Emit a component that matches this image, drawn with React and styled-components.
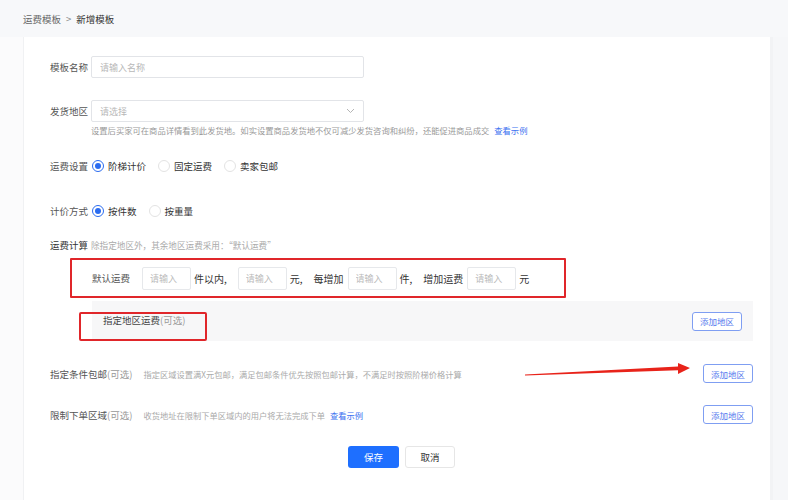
import React from "react";
import styled, { createGlobalStyle } from "styled-components";

const GlobalStyle = createGlobalStyle`
  body {
    margin: 0;
    background: #f7f8fa;
    font-family: "Noto Sans CJK SC", "Noto Sans", sans-serif;
  }
`;

function Radio({ checked, children }) {
  return (
    <RadioItem>
      <RadioDot checked={checked} />
      <span>{children}</span>
    </RadioItem>
  );
}

function App() {
  return (
    <>
      <GlobalStyle />
      <Page>
        <Crumb>
          <span className="prev">运费模板</span>
          <span className="sep">&gt;</span>
          <span className="cur">新增模板</span>
        </Crumb>
        <Body>
          <SideStrip />
          <Card>
            <FormRow height={22} top={19}>
              <Label>模板名称</Label>
              <TextInput placeholder="请输入名称" />
            </FormRow>

            <FormRow height={22} top={22}>
              <Label>发货地区</Label>
              <SelectBox>
                <span>请选择</span>
                <svg width="9" height="6" viewBox="0 0 9 6">
                  <path d="M1 1l3.5 3.5L8 1" fill="none" stroke="#b5b5b5" strokeWidth="1" />
                </svg>
              </SelectBox>
            </FormRow>
            <Hint indent={41}>
              设置后买家可在商品详情看到此发货地。如实设置商品发货地不仅可减少发货咨询和纠纷，还能促进商品成交
              <LinkText>查看示例</LinkText>
            </Hint>

            <FormRow height={14} top={23}>
              <Label>运费设置</Label>
              <RadioGroup>
                <Radio checked>阶梯计价</Radio>
                <Radio>固定运费</Radio>
                <Radio>卖家包邮</Radio>
              </RadioGroup>
            </FormRow>

            <FormRow height={14} top={31}>
              <Label>计价方式</Label>
              <RadioGroup>
                <Radio checked>按件数</Radio>
                <Radio>按重量</Radio>
              </RadioGroup>
            </FormRow>

            <FormRow height={12} top={21}>
              <Label strong>运费计算</Label>
              <SmallNote size={8.6}>除指定地区外，其余地区运费采用：“默认运费”</SmallNote>
            </FormRow>

            <FeeBox>
              <FeeTitle>默认运费</FeeTitle>
              <SmallInput placeholder="请输入" />
              <Unit>件以内,</Unit>
              <SmallInput placeholder="请输入" />
              <Unit>元,</Unit>
              <Lead>每增加</Lead>
              <SmallInput placeholder="请输入" />
              <Unit>件,</Unit>
              <Lead>增加运费</Lead>
              <SmallInput placeholder="请输入" />
              <Unit>元</Unit>
            </FeeBox>

            <AreaPanel>
              <span className="title">
                指定地区运费<Optional>(可选)</Optional>
              </span>
              <OutlineButton>添加地区</OutlineButton>
              <Highlight />
            </AreaPanel>

            <FormRow height={19} top={23}>
              <Label>
                指定条件包邮<Optional>(可选)</Optional>
              </Label>
              <SmallNote gap={8} size={8.25}>
                指定区域设置满X元包邮，满足包邮条件优先按照包邮计算，不满足时按照阶梯价格计算
              </SmallNote>
              <OutlineButton push>添加地区</OutlineButton>
            </FormRow>

            <FormRow height={19} top={22}>
              <Label>
                限制下单区域<Optional>(可选)</Optional>
              </Label>
              <SmallNote gap={8} size={8.25}>
                收货地址在限制下单区域内的用户将无法完成下单
                <LinkText>查看示例</LinkText>
              </SmallNote>
              <OutlineButton push>添加地区</OutlineButton>
            </FormRow>

            <Actions>
              <PrimaryButton>保存</PrimaryButton>
              <GhostButton>取消</GhostButton>
            </Actions>
          </Card>
          <RightStrip />
        </Body>

        <Arrow width="180" height="30" viewBox="0 0 180 30">
          <polygon
            points="5,18.6 158,10.6 158,7 170,12 158,18 158,14.2 5,19.6"
            fill="#e8231a"
          />
        </Arrow>
      </Page>
    </>
  );
}

const Page = styled.div`
  position: relative;
  width: 788px;
  height: 500px;
  overflow: hidden;
  display: flex;
  flex-direction: column;
`;

const Crumb = styled.div`
  height: 37px;
  flex: 0 0 37px;
  display: flex;
  align-items: center;
  padding-left: 23px;
  font-size: 9.5px;
  color: #666;
  .sep {
    margin: 0 5px;
    color: #888;
  }
  .cur {
    color: #333;
  }
`;

const Body = styled.div`
  flex: 1;
  display: flex;
`;

const SideStrip = styled.div`
  width: 23px;
  background: #fbfbfc;
  border-right: 1px solid #f0f1f3;
`;

const RightStrip = styled.div`
  flex: 1;
  background: #f6f7f9;
  border-left: 3px solid #f2f3f5;
`;

const Card = styled.div`
  width: 703px;
  padding: 0 17px 0 26px;
  background: #fff;
  display: flex;
  flex-direction: column;
`;

const FormRow = styled.div`
  display: flex;
  align-items: center;
  height: ${(p) => p.height}px;
  margin-top: ${(p) => p.top}px;
`;

const Label = styled.span`
  font-size: 9.5px;
  color: ${(p) => (p.strong ? "#333" : "#555")};
  margin-right: 3px;
  white-space: nowrap;
`;

const Optional = styled.span`
  color: #999;
`;

const TextInput = styled.input`
  box-sizing: border-box;
  width: 273px;
  height: 22px;
  border: 1px solid #e2e4e8;
  border-radius: 2px;
  padding: 0 8px;
  font-family: inherit;
  font-size: 9px;
  outline: none;
  &::placeholder {
    color: #b8b8b8;
  }
`;

const SelectBox = styled.div`
  box-sizing: border-box;
  width: 273px;
  height: 22px;
  border: 1px solid #e2e4e8;
  border-radius: 2px;
  padding: 0 8px;
  display: flex;
  align-items: center;
  justify-content: space-between;
  font-size: 9px;
  color: #b8b8b8;
`;

const Hint = styled.div`
  margin: 2px 0 0 ${(p) => p.indent}px;
  font-size: 8.3px;
  line-height: 12px;
  color: #999;
  white-space: nowrap;
`;

const LinkText = styled.span`
  color: #3a6ff0;
  margin-left: 5px;
`;

const RadioGroup = styled.div`
  display: flex;
  align-items: center;
  gap: 12px;
  margin-left: 1px;
`;

const RadioItem = styled.label`
  display: flex;
  align-items: center;
  gap: 4px;
  font-size: 9.5px;
  color: #333;
`;

const RadioDot = styled.span`
  box-sizing: border-box;
  width: 12px;
  height: 12px;
  border-radius: 50%;
  border: 1px solid ${(p) => (p.checked ? "#2b6cf0" : "#e3e3e3")};
  display: flex;
  align-items: center;
  justify-content: center;
  &::after {
    content: "";
    width: 6px;
    height: 6px;
    border-radius: 50%;
    background: ${(p) => (p.checked ? "#2b6cf0" : "transparent")};
  }
`;

const SmallNote = styled.span`
  margin-left: ${(p) => p.gap || 0}px;
  font-size: ${(p) => p.size || 8}px;
  color: #aaa;
  white-space: nowrap;
`;

const FeeBox = styled.div`
  box-sizing: border-box;
  margin: 7px 0 0 20px;
  width: 496px;
  height: 40px;
  border: 2px solid #e0262a;
  border-radius: 1px;
  display: flex;
  align-items: center;
  padding-left: 20px;
`;

const FeeTitle = styled.span`
  font-size: 9.5px;
  color: #555;
  margin-right: 12px;
`;

const SmallInput = styled.input`
  box-sizing: border-box;
  width: 49px;
  height: 23px;
  border: 1px solid #e6e8eb;
  border-radius: 2px;
  padding: 0 7px;
  font-family: inherit;
  font-size: 9px;
  outline: none;
  &::placeholder {
    color: #bbb;
  }
`;

const Unit = styled.span`
  font-size: 10px;
  color: #333;
  margin: 0 11px 0 3px;
  white-space: nowrap;
`;

const Lead = styled.span`
  font-size: 10px;
  color: #333;
  margin-right: 4px;
  white-space: nowrap;
`;

const AreaPanel = styled.div`
  position: relative;
  margin: 3px 0 0 42px;
  height: 40px;
  background: #f7f7f8;
  display: flex;
  align-items: center;
  justify-content: space-between;
  padding: 0 11px;
  .title {
    font-size: 9.5px;
    color: #444;
    margin-top: -2px;
  }
`;

const Highlight = styled.div`
  position: absolute;
  left: -13px;
  top: 11px;
  width: 128px;
  height: 29px;
  box-sizing: border-box;
  border: 2px solid #e0262a;
  border-radius: 2px;
`;

const OutlineButton = styled.button`
  box-sizing: border-box;
  width: 50px;
  height: 19px;
  padding: 0;
  margin-left: ${(p) => (p.push ? "auto" : "0")};
  border: 1px solid #7f9ef2;
  border-radius: 3px;
  background: #fff;
  color: #5479ee;
  font-family: inherit;
  font-size: 8.5px;
`;

const Actions = styled.div`
  display: flex;
  justify-content: center;
  gap: 6px;
  margin-top: 22px;
`;

const PrimaryButton = styled.button`
  width: 51px;
  height: 22px;
  border: none;
  border-radius: 3px;
  background: #1e6fff;
  color: #fff;
  font-family: inherit;
  font-size: 9.5px;
`;

const GhostButton = styled.button`
  box-sizing: border-box;
  width: 50px;
  height: 22px;
  border: 1px solid #e6e6e6;
  border-radius: 3px;
  background: #fff;
  color: #333;
  font-family: inherit;
  font-size: 9.5px;
`;

const Arrow = styled.svg`
  position: absolute;
  left: 520px;
  top: 356px;
`;

export default App;
